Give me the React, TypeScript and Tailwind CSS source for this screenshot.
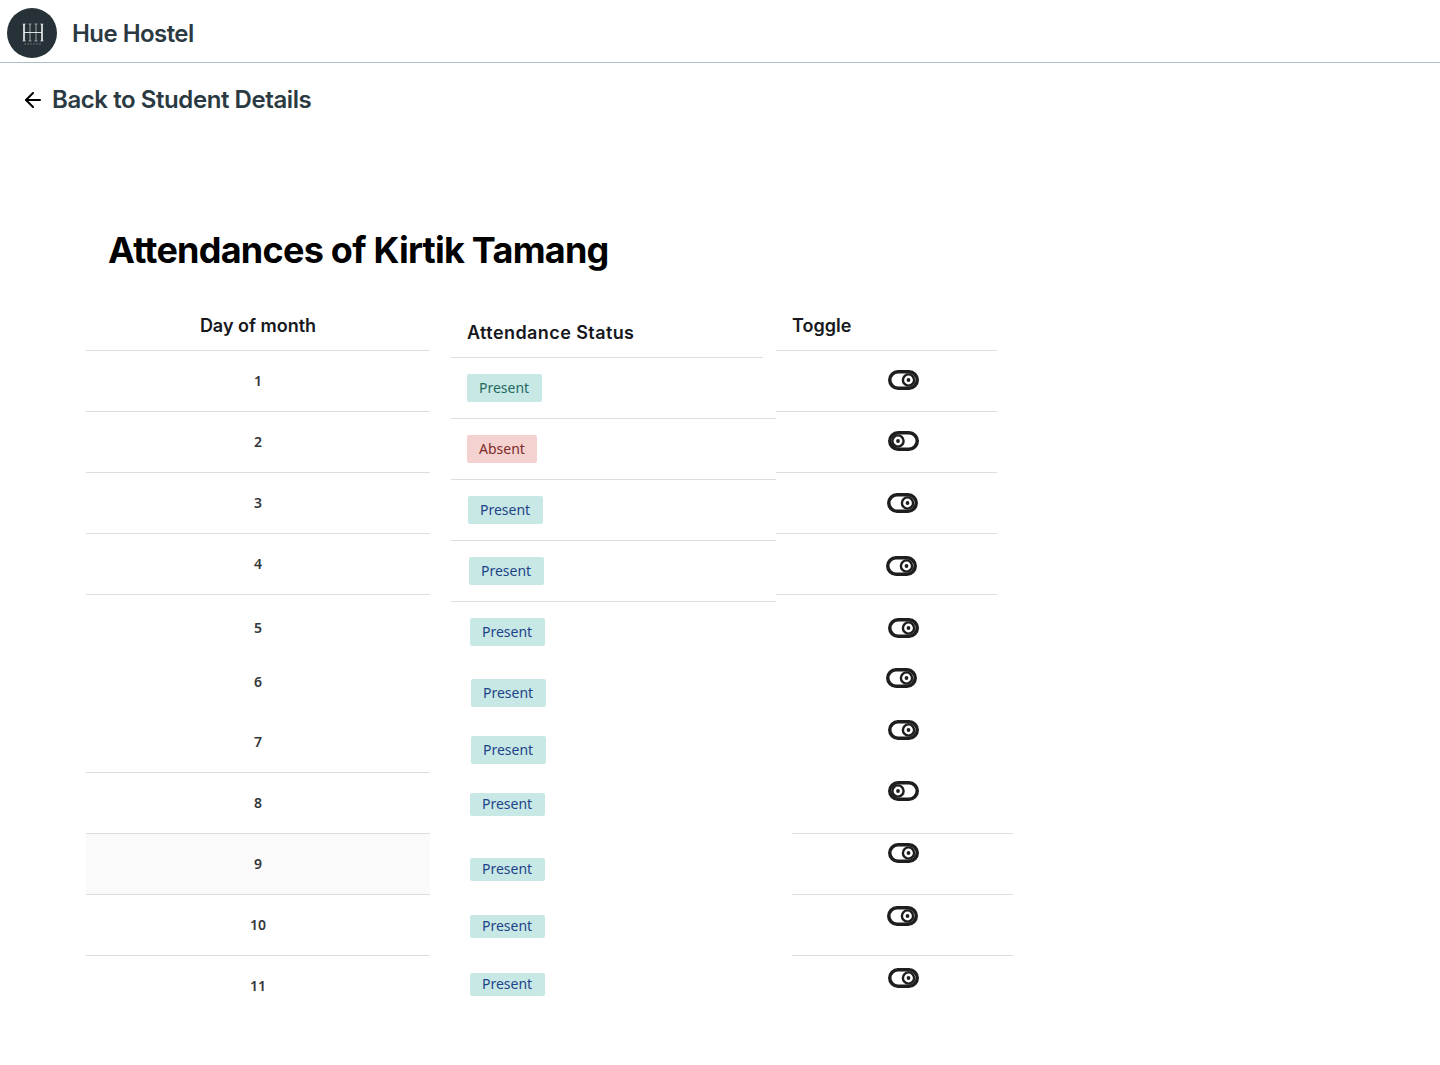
import React from "react";
import { ArrowLeft } from "lucide-react";

const dayRows = [
  { day: "1", className: "h-[61px] pt-5 border-b border-[#dedede]" },
  { day: "2", className: "h-[61px] pt-5 border-b border-[#dedede]" },
  { day: "3", className: "h-[61px] pt-5 border-b border-[#dedede]" },
  { day: "4", className: "h-[61px] pt-5 border-b border-[#dedede]" },
  { day: "5", className: "h-[65px] pt-[23px]" },
  { day: "6", className: "h-[60px] pt-3" },
  { day: "7", className: "h-[53px] pt-3 border-b border-[#dedede]" },
  { day: "8", className: "h-[61px] pt-5 border-b border-[#dedede]" },
  { day: "9", className: "h-[61px] pt-5 border-b border-[#dedede] bg-[#fafafa]" },
  { day: "10", className: "h-[61px] pt-5 border-b border-[#dedede]" },
  { day: "11", className: "h-[61px] pt-5" },
];

const Badge = ({ label, className }: { label: string; className: string }) => (
  <span
    className={`flex items-center justify-center rounded-[2px] pr-px font-['Noto_Sans',sans-serif] text-sm ${className}`}
  >
    {label}
  </span>
);

const Toggle = ({ on = true, className = "" }: { on?: boolean; className?: string }) => (
  <svg viewBox="0 0 31 20" className={`block h-5 w-[31px] ${className}`} fill="none">
    <rect x="1.75" y="1.75" width="27.5" height="16.5" rx="8.25" stroke="#1e1e1e" strokeWidth="3.5" />
    <circle cx={on ? 20.5 : 10} cy="10" r="5.6" fill="#fff" stroke="#1e1e1e" strokeWidth="2.4" />
    <circle cx={on ? 20.5 : 10} cy="10" r="1.9" fill="#1e1e1e" />
  </svg>
);

const Logo = () => (
  <svg viewBox="0 0 50 50" className="h-[50px] w-[50px] shrink-0">
    <circle cx="25" cy="25" r="25" fill="#263238" />
    <g stroke="#f2f4f4" fill="none">
      <path d="M17 16v17M35 16v17" strokeWidth="1.6" />
      <path d="M23 16v17M29 16v17" strokeWidth="0.6" />
      <path d="M15.5 16h3.5M21.5 16h3M27.5 16h3M33 16h3.5M15.5 33h3.5M21.5 33h3M27.5 33h3M33 33h3.5" strokeWidth="0.5" />
      <path d="M17 24.5h18" strokeWidth="0.9" />
    </g>
    <path d="M17 36h17" stroke="#8d9a9e" strokeWidth="0.6" strokeDasharray="2 1" />
  </svg>
);

export default function App() {
  return (
    <div className="min-h-[1065px] bg-white font-['Inter',sans-serif]">
      <header className="flex h-[63px] items-center gap-[15px] border-b border-[#a9bfc6] pl-[7px] pt-[4px]">
        <Logo />
        <span className="mt-0.5 text-2xl font-semibold tracking-[-0.55px] text-[#2b3a42]">Hue Hostel</span>
      </header>

      <a className="ml-[21px] mt-[21px] flex h-8 items-center gap-[7px] text-2xl font-semibold tracking-[-0.42px] text-[#2b3a42]">
        <ArrowLeft className="h-6 w-6 text-black" strokeWidth={2} />
        Back to Student Details
      </a>

      <h1 className="ml-[108px] mt-[114px] text-4xl font-bold leading-10 tracking-[-0.75px] text-black">
        Attendances of Kirtik Tamang
      </h1>

      <div className="ml-[86px] mt-[32px] flex items-start">
        {/* Day of month */}
        <div className="w-[344px]">
          <div className="h-[49px] border-b border-[#dedede] pt-[13px] text-center text-lg font-semibold leading-[22px] text-[#16181d]">
            Day of month
          </div>
          {dayRows.map((row) => (
            <div
              key={row.day}
              className={`box-border text-center font-['Noto_Sans',sans-serif] text-sm font-semibold leading-5 text-[#33363a] ${row.className}`}
            >
              {row.day}
            </div>
          ))}
        </div>

        {/* Attendance Status */}
        <div className="ml-[21px] w-[325px]">
          <div className="h-14 w-[312px] border-b border-[#dedede] pl-4 pt-5 text-lg font-semibold leading-[22px] tracking-[0.42px] text-[#16181d]">
            Attendance Status
          </div>
          <div className="h-[61px] border-b border-[#dedede] pl-4 pt-4">
            <Badge label="Present" className="h-7 w-[75px] bg-[#c8e8e6] text-[#1f6b5f]" />
          </div>
          <div className="h-[61px] border-b border-[#dedede] pl-4 pt-4">
            <Badge label="Absent" className="h-7 w-[70px] bg-[#f4d2d0] pl-px text-[#7c2a2a]" />
          </div>
          <div className="h-[61px] border-b border-[#dedede] pl-[17px] pt-4">
            <Badge label="Present" className="h-7 w-[75px] bg-[#c8e8e6] text-[#1e4488]" />
          </div>
          <div className="h-[61px] border-b border-[#dedede] pl-[18px] pt-4">
            <Badge label="Present" className="h-7 w-[75px] bg-[#c8e8e6] text-[#1e4488]" />
          </div>
          <div className="flex flex-col items-start pl-[19px] pt-4">
            <Badge label="Present" className="h-7 w-[75px] bg-[#c8e8e6] text-[#1e4488]" />
            <Badge label="Present" className="ml-px mt-[33px] h-7 w-[75px] bg-[#c8e8e6] text-[#1e4488]" />
            <Badge label="Present" className="ml-px mt-[29px] h-7 w-[75px] bg-[#c8e8e6] text-[#1e4488]" />
            <Badge label="Present" className="mt-[29px] h-[23px] w-[75px] bg-[#c8e8e6] pb-0.5 text-[#1e4488]" />
            <Badge label="Present" className="mt-[42px] h-[23px] w-[75px] bg-[#c8e8e6] pb-0.5 text-[#1e4488]" />
            <Badge label="Present" className="mt-[34px] h-[23px] w-[75px] bg-[#c8e8e6] pb-0.5 text-[#1e4488]" />
            <Badge label="Present" className="mt-[35px] h-[23px] w-[75px] bg-[#c8e8e6] pb-0.5 text-[#1e4488]" />
          </div>
        </div>

        {/* Toggle */}
        <div className="w-[237px]">
          <div className="h-[49px] w-[221px] border-b border-[#dedede] pl-4 pt-[13px] text-lg font-semibold leading-[22px] text-[#16181d]">
            Toggle
          </div>
          <div className="h-[61px] w-[221px] border-b border-[#dedede] pl-28 pt-[19px]">
            <Toggle />
          </div>
          <div className="h-[61px] w-[221px] border-b border-[#dedede] pl-28 pt-[19px]">
            <Toggle on={false} />
          </div>
          <div className="h-[61px] w-[221px] border-b border-[#dedede] pl-[111px] pt-5">
            <Toggle />
          </div>
          <div className="h-[61px] w-[221px] border-b border-[#dedede] pl-[110px] pt-[22px]">
            <Toggle />
          </div>
          <div className="ml-4 flex h-[239px] flex-col items-start border-b border-[#dedede] pl-24 pt-[23px]">
            <Toggle />
            <Toggle className="-ml-0.5 mt-[30px]" />
            <Toggle className="mt-8" />
            <Toggle on={false} className="mt-[41px]" />
          </div>
          <div className="ml-4 h-[61px] border-b border-[#dedede] pl-24 pt-[9px]">
            <Toggle />
          </div>
          <div className="ml-4 h-[61px] border-b border-[#dedede] pl-[95px] pt-[11px]">
            <Toggle />
          </div>
          <div className="ml-4 h-[61px] pl-24 pt-3">
            <Toggle />
          </div>
        </div>
      </div>
    </div>
  );
}
